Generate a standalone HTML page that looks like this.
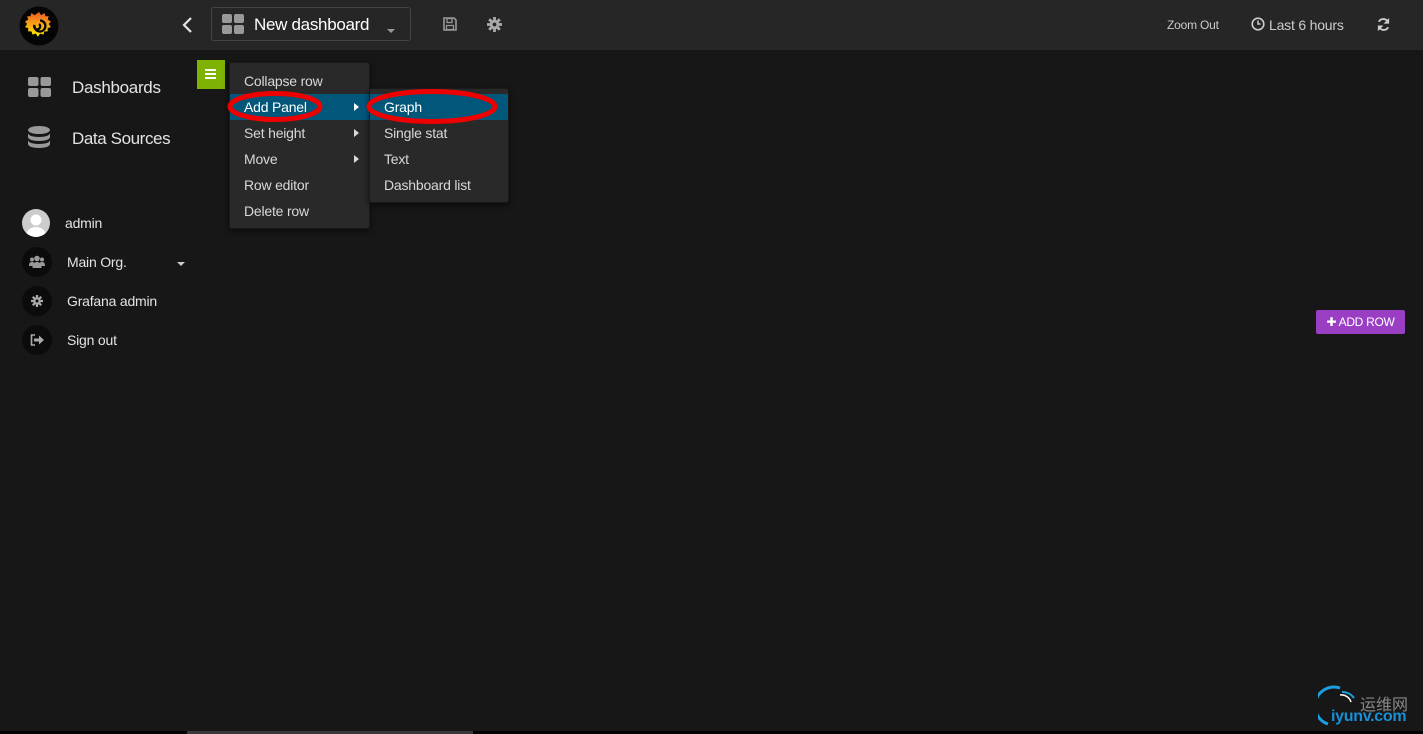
<!DOCTYPE html>
<html><head><meta charset="utf-8"><style>
*{margin:0;padding:0;box-sizing:border-box}
body{width:1423px;height:734px;background:#171717;font-family:"Liberation Sans",Arial,sans-serif;color:#e3e3e3;position:relative;overflow:hidden}
.top{position:absolute;left:0;top:0;width:1423px;height:50px;background:#262626}
.abs{position:absolute}
.menu{position:absolute;background:#292929;border:1px solid #1a1a1a;border-radius:3px;box-shadow:0 2px 6px rgba(0,0,0,.6)}
.mi{height:26px;line-height:26px;padding-left:14px;font-size:14px;color:#d8d8d8;position:relative;letter-spacing:-0.2px}
.mi.act{background:#01577a;color:#fff}
.arr{position:absolute;right:10px;top:9px;width:0;height:0;border-left:5px solid #d8d8d8;border-top:4px solid transparent;border-bottom:4px solid transparent}
.circ{position:absolute;width:30px;height:30px;border-radius:50%;background:#0b0b0b}
.st{font-size:14px;color:#e3e3e3;letter-spacing:-0.2px}
</style></head><body>
<div class="top"></div>
<svg class="abs" style="left:19px;top:6px" width="40" height="40" viewBox="0 0 40 40">
<defs><linearGradient id="g" x1="0" y1="1" x2="0" y2="0"><stop offset="0" stop-color="#fff100"/><stop offset="1" stop-color="#f05a28"/></linearGradient></defs>
<circle cx="20" cy="20" r="19.5" fill="#050505"/>
<path d="M20 7l2 3 3-2 1 3 3 0-1 3 3 2-2 2 2 3-3 1 0 3-3 0-1 3-3-1-2 3-2-3-3 1-1-3-3 0 0-3-3-1 2-3-2-2 3-2-1-3 3 0 1-3 3 2z" fill="url(#g)" transform="translate(20 20) scale(1.08) translate(-20 -20)"/>
<path d="M21 14.5a5.5 5.5 0 1 1-5.5 4.5a3 3 0 1 0 4.5-1" fill="none" stroke="#050505" stroke-width="2.3"/>
</svg>
<svg class="abs" style="left:181px;top:16px" width="14" height="18" viewBox="0 0 14 18"><path d="M10 2L3 9l7 7" fill="none" stroke="#e3e3e3" stroke-width="2.2"/></svg>
<div class="abs" style="left:211px;top:7px;width:200px;height:34px;border:1px solid #444;border-radius:3px;background:#262626"></div>
<svg class="abs" style="left:222px;top:14px" width="22" height="20" viewBox="0 0 22 20"><rect x="0" y="0" width="10" height="9" rx="2" fill="#999"/><rect x="12" y="0" width="10" height="9" rx="2" fill="#999"/><rect x="0" y="11" width="10" height="9" rx="2" fill="#999"/><rect x="12" y="11" width="10" height="9" rx="2" fill="#999"/></svg>
<div class="abs" style="left:254px;top:15px;font-size:17px;color:#fff;letter-spacing:-0.3px">New dashboard</div>
<div class="abs" style="left:387px;top:29px;border-top:4px solid #999;border-left:4px solid transparent;border-right:4px solid transparent"></div>
<svg class="abs" style="left:443px;top:17px" width="14" height="14" viewBox="0 0 14 14"><path d="M1 1h10l2 2v10H1z" fill="none" stroke="#999" stroke-width="1.6"/><rect x="4" y="1.5" width="5" height="4" fill="none" stroke="#999" stroke-width="1.3"/><rect x="3.5" y="8.5" width="7" height="4" fill="none" stroke="#999" stroke-width="1.2"/></svg>
<svg class="abs" style="left:487px;top:17px" width="15" height="15" viewBox="0 0 16 16"><g fill="#aaa"><circle cx="8" cy="8" r="5"/><rect x="6.5" y="0" width="3" height="16"/><rect x="0" y="6.5" width="16" height="3"/><rect x="6.5" y="0" width="3" height="16" transform="rotate(45 8 8)"/><rect x="6.5" y="0" width="3" height="16" transform="rotate(-45 8 8)"/></g><circle cx="8" cy="8" r="2" fill="#262626"/></svg>
<div class="abs" style="left:1167px;top:18px;font-size:12px;color:#ccc;letter-spacing:-0.2px">Zoom Out</div>
<svg class="abs" style="left:1251px;top:17px" width="14" height="14" viewBox="0 0 14 14"><circle cx="7" cy="7" r="5.8" fill="none" stroke="#ccc" stroke-width="1.6"/><path d="M7 3.5V7H9.5" fill="none" stroke="#ccc" stroke-width="1.5"/></svg>
<div class="abs" style="left:1269px;top:17px;font-size:14px;color:#ccc;letter-spacing:-0.2px">Last 6 hours</div>
<svg class="abs" style="left:1376px;top:17px" width="15" height="15" viewBox="0 0 16 16"><path d="M13 6A5.5 5.5 0 0 0 3 5M3 10a5.5 5.5 0 0 0 10 1" fill="none" stroke="#ccc" stroke-width="2"/><path d="M14 1v6h-6z M2 15v-6h6z" fill="#ccc"/></svg>
<svg class="abs" style="left:28px;top:77px" width="23" height="20" viewBox="0 0 23 20"><rect x="0" y="0" width="10.5" height="9" rx="2" fill="#999"/><rect x="12.5" y="0" width="10.5" height="9" rx="2" fill="#999"/><rect x="0" y="11" width="10.5" height="9" rx="2" fill="#999"/><rect x="12.5" y="11" width="10.5" height="9" rx="2" fill="#999"/></svg>
<div class="abs" style="left:72px;top:78px;font-size:17px;color:#e3e3e3;letter-spacing:-0.3px">Dashboards</div>
<svg class="abs" style="left:28px;top:126px" width="22" height="25" viewBox="0 0 22 25"><g fill="#999"><ellipse cx="11" cy="4" rx="11" ry="4"/><path d="M0 7c0 2.5 5 4 11 4s11-1.5 11-4v4c0 2.5-5 4-11 4S0 13.5 0 11z"/><path d="M0 14c0 2.5 5 4 11 4s11-1.5 11-4v4c0 2.5-5 4-11 4S0 20.5 0 18z"/></g></svg>
<div class="abs" style="left:72px;top:129px;font-size:17px;color:#e3e3e3;letter-spacing:-0.4px">Data Sources</div>
<svg class="abs" style="left:22px;top:209px" width="28" height="28" viewBox="0 0 28 28"><defs><clipPath id="c"><circle cx="14" cy="14" r="14"/></clipPath></defs><circle cx="14" cy="14" r="14" fill="#ccc"/><g clip-path="url(#c)" fill="#fff"><circle cx="14" cy="11" r="5.5"/><ellipse cx="14" cy="26" rx="10" ry="8"/></g></svg>
<div class="abs st" style="left:65px;top:215px">admin</div>
<div class="circ" style="left:22px;top:247px"></div>
<svg class="abs" style="left:29px;top:255px" width="16" height="13" viewBox="0 0 16 13"><g fill="#999"><circle cx="8" cy="3.5" r="2.8"/><circle cx="3" cy="4.5" r="2"/><circle cx="13" cy="4.5" r="2"/><path d="M3.5 13c0-4 1.5-6 4.5-6s4.5 2 4.5 6z"/><path d="M0 11c0-3 1-4 3-4s2 1 2 1l-1 3z M16 11c0-3-1-4-3-4s-2 1-2 1l1 3z"/></g></svg>
<div class="abs st" style="left:67px;top:254px">Main Org.</div>
<div class="abs" style="left:177px;top:262px;border-top:4px solid #ccc;border-left:4px solid transparent;border-right:4px solid transparent"></div>
<div class="circ" style="left:22px;top:286px"></div>
<svg class="abs" style="left:31px;top:295px" width="12" height="12" viewBox="0 0 16 16"><g fill="#aaa"><circle cx="8" cy="8" r="5"/><rect x="6.5" y="0" width="3" height="16"/><rect x="0" y="6.5" width="16" height="3"/><rect x="6.5" y="0" width="3" height="16" transform="rotate(45 8 8)"/><rect x="6.5" y="0" width="3" height="16" transform="rotate(-45 8 8)"/></g><circle cx="8" cy="8" r="2" fill="#0b0b0b"/></svg>
<div class="abs st" style="left:67px;top:293px">Grafana admin</div>
<div class="circ" style="left:22px;top:325px"></div>
<svg class="abs" style="left:30px;top:334px" width="15" height="12" viewBox="0 0 15 12"><path d="M5 1H1.5v10H5" fill="none" stroke="#aaa" stroke-width="1.6"/><path d="M4 4.5h5V1.5l5 4.5-5 4.5V7.5H4z" fill="#aaa"/></svg>
<div class="abs st" style="left:67px;top:332px">Sign out</div>
<div class="abs" style="left:197px;top:60px;width:28px;height:29px;background:#7eb203"></div>
<div class="abs" style="left:205px;top:69px;width:11px;height:2px;background:#fff;box-shadow:0 4px 0 #fff,0 8px 0 #fff"></div>
<div class="menu" style="left:229px;top:62px;width:141px;height:167px;padding-top:5px">
<div class="mi">Collapse row</div>
<div class="mi act">Add Panel<span class="arr" style="border-left-color:#fff"></span></div>
<div class="mi">Set height<span class="arr"></span></div>
<div class="mi">Move<span class="arr"></span></div>
<div class="mi">Row editor</div>
<div class="mi">Delete row</div>
</div>
<div class="menu" style="left:369px;top:88px;width:140px;height:115px;padding-top:5px">
<div class="mi act">Graph</div>
<div class="mi">Single stat</div>
<div class="mi">Text</div>
<div class="mi">Dashboard list</div>
</div>
<svg class="abs" style="left:0;top:0" width="520" height="140"><ellipse cx="275" cy="106.5" rx="45" ry="13" fill="none" stroke="#ee0000" stroke-width="5"/><ellipse cx="432" cy="106.5" rx="63" ry="15" fill="none" stroke="#ee0000" stroke-width="5"/></svg>
<div class="abs" style="left:1316px;top:310px;width:89px;height:24px;background:#9a3fc4;border-radius:2px;color:#fff;font-size:12px;line-height:24px;text-align:center;letter-spacing:-0.3px">✚ ADD ROW</div>
<div class="abs" style="left:0;top:731px;width:1423px;height:3px;background:#000"></div>
<div class="abs" style="left:187px;top:731px;width:286px;height:3px;background:#3a3a3a"></div>
<svg class="abs" style="left:1318px;top:684px" width="40" height="44" viewBox="0 0 40 44"><path d="M22 4A18 18 0 0 0 10 40" fill="none" stroke="#1aa0e0" stroke-width="3"/><path d="M24 8A14 14 0 0 1 36 14" fill="none" stroke="#1aa0e0" stroke-width="2"/><path d="M22 11A10 10 0 0 1 33 18" fill="none" stroke="#fff" stroke-width="1.5"/></svg>
<div class="abs" style="left:1360px;top:691px;font-size:16px;color:#888;font-family:'Liberation Sans','Noto Sans CJK SC',sans-serif">运维网</div>
<div class="abs" style="left:1331px;top:708px;font-size:16px;color:#1a8fd8;font-weight:bold;letter-spacing:-0.3px">iyunv.com</div>
</body></html>
